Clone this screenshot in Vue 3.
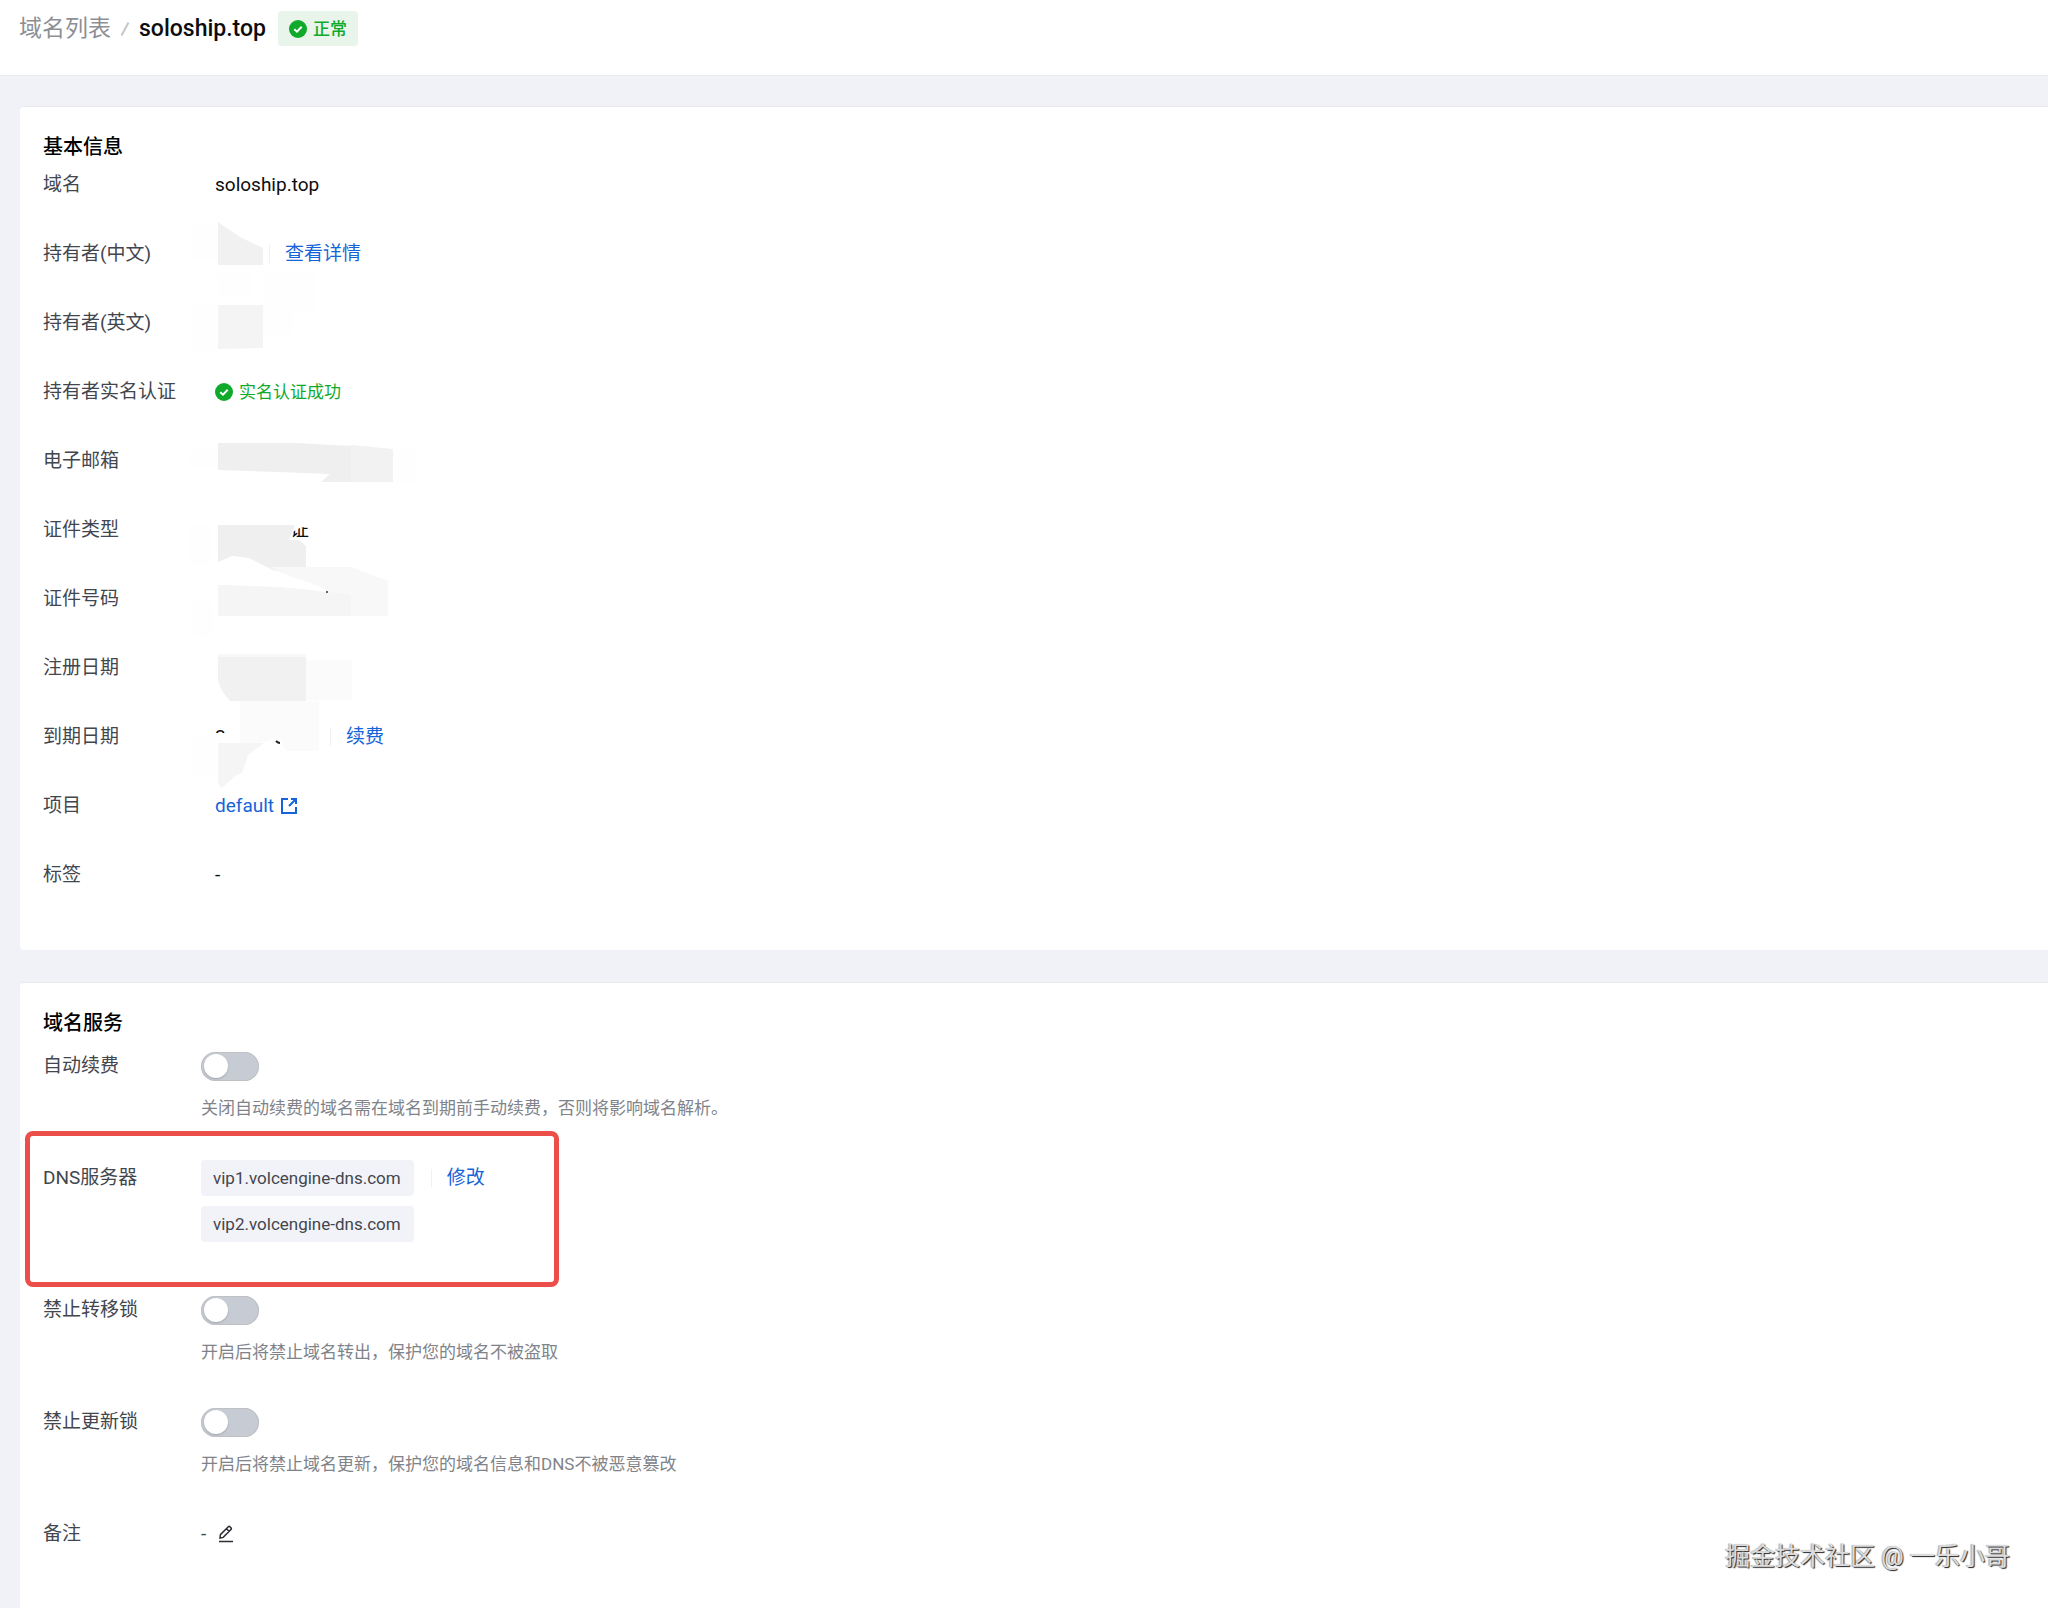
<template>
  <div class="domain-page">
    <header class="page-header">
      <nav class="breadcrumb">
        <a href="#" class="crumb-link">域名列表</a>
        <svg class="crumb-slash" viewBox="0 0 10 16"><path d="M8.500 1.500 1.500 14.500" /></svg>
        <h1>{{ domain }}</h1>
      </nav>
      <span class="status-tag">
        <svg class="check-icon" viewBox="0 0 18 18">
          <circle cx="9" cy="9" r="9" />
          <path d="M5.300 9.200 8 11.700 12.700 6.700" />
        </svg>
        正常
      </span>
    </header>

    <main class="main-content">
      <section class="card basic-card">
        <h2>基本信息</h2>
        <dl class="info-list">
          <div v-for="item in basicInfo" :key="item.key" class="info-row">
            <dt>{{ item.label }}</dt>
            <dd>
              <span v-if="item.value">{{ item.value }}</span>

              <span v-if="item.key === 'verified'" class="verified">
                <svg class="check-icon" viewBox="0 0 18 18">
                  <circle cx="9" cy="9" r="9" />
                  <path d="M5.300 9.200 8 11.700 12.700 6.700" />
                </svg>
                实名认证成功
              </span>

              <span v-if="item.key === 'idType'" class="hidden-value id-type">
                <span class="id-rest">证</span>
              </span>

              <template v-if="item.key === 'ownerCn'">
                <span class="hidden-value owner"></span>
                <a href="#" class="link with-divider">查看详情</a>
              </template>

              <template v-if="item.key === 'expire'">
                <span class="hidden-value expire"><span class="date-rest">2</span></span>
                <a href="#" class="link with-divider">续费</a>
              </template>

              <a v-if="item.key === 'project'" href="#" class="link project">
                default
                <svg class="open-icon" viewBox="0 0 18 18">
                  <path d="M8 2H2v14h14v-6M11 2h5v5M16 2 9 9" />
                </svg>
              </a>
            </dd>
          </div>
        </dl>

        <!-- redaction marks over the private values -->
        <svg class="redaction" viewBox="0 0 250 600" aria-hidden="true">
          <g fill="#fefefe">
            <path d="M3 13h22v36H3zM28 62h33v24H28zM73 62h52v40H73zM3 92h22v48H3zM73 102h30v22H73z" />
            <path d="M0 238h26v18H0zM206 238h20v34h-20zM0 314h22v40H0zM3 390h20v36H3z" />
            <path d="M3 526h22v40H3z" />
          </g>
          <path fill="#f1f1f1" d="M28 11 50 26 73 37v17H28z" />
          <path fill="#f4f4f4" d="M28 94h45v43l-45 1z" />
          <path fill="#efefef" d="M28 232h78l75 4v35h-50l9-8-24-1-88-3z" />
          <path fill="#f2f2f2" d="M161 234l42 4v33h-42z" />
          <path fill="#efefef" d="M28 314h77l-6 15h10l7 6v29l-36-5-23-12-15-2-14 6z" />
          <path fill="#f8f8f8" d="M80 356h82l36 14v35H28v-31l60 2 38 4z" />
          <path fill="#f5f5f5" d="M28 374l60 2 45 4 28 4v21H28z" />
          <path fill="#fff" d="M28 353 42 345l17 2 24 12 48 17 9 6-54-9H28z" />
          <path fill="#f8f8f8" d="M28 443h88v8H28z" />
          <path fill="#f1f1f1" d="M28 446h88v44H40l-8-10-4-10z" />
          <path fill="#fbfbfb" d="M116 449h46v40h-46zM50 490h79v50H96l-5-10-8-2-18 6H50z" />
          <path fill="#f5f5f5" d="M28 532h46l-16 12-6 18-7 3-13 12-4-4z" />
          <path fill="none" stroke="#222" stroke-width="2" d="M86 530q2 2 4 2" />
          <circle cx="137" cy="381" r="1" fill="#333" />
        </svg>
      </section>

      <section class="card service-card">
        <h2>域名服务</h2>
        <div class="service-list">
          <div class="service-row">
            <label class="service-label" for="autoRenew">自动续费</label>
            <div class="service-body">
              <div class="control">
                <input id="autoRenew" v-model="autoRenew" type="checkbox" role="switch" class="switch" />
              </div>
              <p>关闭自动续费的域名需在域名到期前手动续费，否则将影响域名解析。</p>
            </div>
          </div>

          <div class="service-row dns-row">
            <span class="service-label">DNS服务器</span>
            <ul class="dns-list">
              <li v-for="server in dnsServers" :key="server">{{ server }}</li>
            </ul>
            <a href="#" class="link with-divider dns-edit">修改</a>
            <div class="highlight"></div>
          </div>

          <div class="service-row">
            <label class="service-label" for="transferLock">禁止转移锁</label>
            <div class="service-body">
              <div class="control">
                <input id="transferLock" v-model="transferLock" type="checkbox" role="switch" class="switch" />
              </div>
              <p>开启后将禁止域名转出，保护您的域名不被盗取</p>
            </div>
          </div>

          <div class="service-row">
            <label class="service-label" for="updateLock">禁止更新锁</label>
            <div class="service-body">
              <div class="control">
                <input id="updateLock" v-model="updateLock" type="checkbox" role="switch" class="switch" />
              </div>
              <p>开启后将禁止域名更新，保护您的域名信息和DNS不被恶意篡改</p>
            </div>
          </div>

          <div class="service-row">
            <span class="service-label">备注</span>
            <div class="control remark">
              <span>-</span>
              <button type="button" class="edit-btn" aria-label="编辑备注">
                <svg viewBox="0 0 16 18">
                  <path d="M1 16.500h14M2 13l.4-3.300L10.300 1.800q.8-.8 1.600 0l1.100 1.100q.8.8 0 1.600L5.200 12.400zM8.500 3.800l2.700 2.700" />
                </svg>
              </button>
            </div>
          </div>
        </div>
      </section>
    </main>

    <div class="watermark">掘金技术社区 @ 一乐小哥</div>
  </div>
</template>

<script setup>
import { ref } from 'vue'

const domain = 'soloship.top'

const basicInfo = [
  { key: 'domain', label: '域名', value: domain },
  { key: 'ownerCn', label: '持有者(中文)' },
  { key: 'ownerEn', label: '持有者(英文)' },
  { key: 'verified', label: '持有者实名认证' },
  { key: 'email', label: '电子邮箱' },
  { key: 'idType', label: '证件类型' },
  { key: 'idNumber', label: '证件号码' },
  { key: 'created', label: '注册日期' },
  { key: 'expire', label: '到期日期' },
  { key: 'project', label: '项目' },
  { key: 'tags', label: '标签', value: '-' },
]

const dnsServers = ['vip1.volcengine-dns.com', 'vip2.volcengine-dns.com']

const autoRenew = ref(false)
const transferLock = ref(false)
const updateLock = ref(false)
</script>

<style>
body {
  margin: 0;
  background: #f1f2f7;
}
</style>

<style scoped>
* {
  margin: 0;
  padding: 0;
  box-sizing: border-box;
}

.domain-page {
  position: relative;
  min-height: 100vh;
  display: flex;
  flex-direction: column;
  overflow: hidden;
  background: #f1f2f7;
  color: #0c0d0e;
  font-family: Roboto, "Noto Sans CJK SC", sans-serif;
  font-size: 19px;
  line-height: 28px;
}

.page-header {
  display: flex;
  align-items: flex-start;
  gap: 12px;
  padding: 11px 19px 29px;
  background: #fff;
  border-bottom: 1px solid #eaebef;
}

.breadcrumb {
  display: flex;
  align-items: center;
  gap: 9px;
  height: 35px;
}

.crumb-link {
  color: #8c8f94;
  font-size: 23px;
  text-decoration: none;
}

.crumb-slash {
  width: 10px;
  height: 16px;
  fill: none;
  stroke: #c4c6ca;
  stroke-width: 2;
}

h1 {
  font-size: 23px;
  font-weight: 500;
}

.status-tag {
  display: flex;
  align-items: center;
  gap: 6px;
  height: 35px;
  padding: 0 11px;
  border-radius: 4px;
  background: #e9f5eb;
  color: #0faa2c;
  font-size: 17px;
  font-weight: 500;
}

.check-icon {
  width: 18px;
  height: 18px;
  fill: #0faa2c;
}

.check-icon path {
  fill: none;
  stroke: #fff;
  stroke-width: 2;
}

.main-content {
  flex: 1;
  display: flex;
  flex-direction: column;
  gap: 32px;
  padding: 30px 0 0 20px;
}

.card {
  position: relative;
  padding: 26px 23px 61px;
  border-top: 1px solid #e9eaee;
  border-radius: 4px 0 0 4px;
  background: #fff;
}

h2 {
  font-size: 20px;
  font-weight: 500;
  line-height: 28px;
  color: #000;
}

.info-list {
  display: flex;
  flex-direction: column;
  gap: 41px;
  margin-top: 10px;
}

.info-row {
  display: flex;
  height: 28px;
}

.info-row dt {
  width: 172px;
  color: #42464e;
}

.info-row dd {
  display: flex;
  align-items: center;
}

.verified {
  display: flex;
  align-items: center;
  gap: 6px;
  color: #0faa2c;
  font-size: 17px;
}

.link {
  color: #1664d9;
  text-decoration: none;
}

.with-divider {
  display: flex;
  align-items: center;
  gap: 15px;
}

.with-divider::before {
  content: "";
  width: 1px;
  height: 18px;
  background: #f0f1f4;
}

.info-list .link {
  position: relative;
  z-index: 1;
}

.hidden-value {
  height: 28px;
}

.owner {
  width: 54px;
}

.expire {
  width: 115px;
}

.id-type {
  width: 94px;
  text-align: right;
}

/* only these corners of the text are left uncovered */
.id-rest {
  display: block;
  clip-path: polygon(100% 40%, 100% 80%, 0 80%, calc(100% - 16px) 56%, calc(100% - 8px) 40%);
}

.date-rest {
  display: block;
  clip-path: inset(0 0 18px 0);
}

.project {
  display: flex;
  align-items: center;
  gap: 6px;
}

.open-icon {
  width: 18px;
  height: 18px;
  fill: none;
  stroke: #1664d9;
  stroke-width: 2;
}

.redaction {
  position: absolute;
  top: 104px;
  left: 170px;
  width: 250px;
  height: 600px;
  pointer-events: none;
}

.service-card {
  flex: 1;
}

.service-list {
  display: flex;
  flex-direction: column;
  gap: 38px;
  margin-top: 11px;
}

.service-row {
  position: relative;
  display: flex;
}

.service-label {
  width: 158px;
  line-height: 36px;
  color: #42464e;
}

.service-body {
  display: flex;
  flex-direction: column;
  gap: 10px;
}

.service-body p {
  color: #80838a;
  font-size: 17px;
}

.control {
  display: flex;
  align-items: center;
  height: 36px;
}

.switch {
  appearance: none;
  display: flex;
  align-items: center;
  width: 58px;
  height: 29px;
  padding: 0 3px;
  border-radius: 15px;
  background: #c7cbd3;
  box-shadow: inset 0 0 0 1px #bfc1c5;
  cursor: pointer;
}

.switch::before {
  content: "";
  width: 24px;
  height: 24px;
  border-radius: 50%;
  background: #fff;
  box-shadow: 0 1px 2px rgba(0, 0, 0, 0.2);
}

.switch:checked {
  justify-content: flex-end;
  background: #1664d9;
}

.dns-row {
  padding-bottom: 12px;
}

.dns-list {
  display: flex;
  flex-direction: column;
  gap: 10px;
  list-style: none;
}

.dns-list li {
  height: 36px;
  padding: 0 13px 0 12px;
  border-radius: 4px;
  background: #f2f3f8;
  color: #42464e;
  font-size: 17px;
  line-height: 36px;
}

.dns-edit {
  height: 36px;
  margin-left: 17px;
}

.highlight {
  position: absolute;
  top: -29px;
  bottom: -33px;
  left: -18px;
  width: 534px;
  border: 5px solid #ec4e49;
  border-radius: 8px;
  pointer-events: none;
}

.remark {
  gap: 12px;
  color: #42464e;
}

.edit-btn {
  display: flex;
  border: none;
  background: none;
  cursor: pointer;
}

.edit-btn svg {
  width: 16px;
  height: 18px;
  fill: none;
  stroke: #2b2e33;
  stroke-width: 1.500;
}

.watermark {
  position: absolute;
  right: 38px;
  bottom: 38px;
  color: #dcdcdc;
  font-size: 25px;
  line-height: 36px;
  text-shadow: 1px 1px 1px #222, -1px 0 1px #aaa;
}
</style>
